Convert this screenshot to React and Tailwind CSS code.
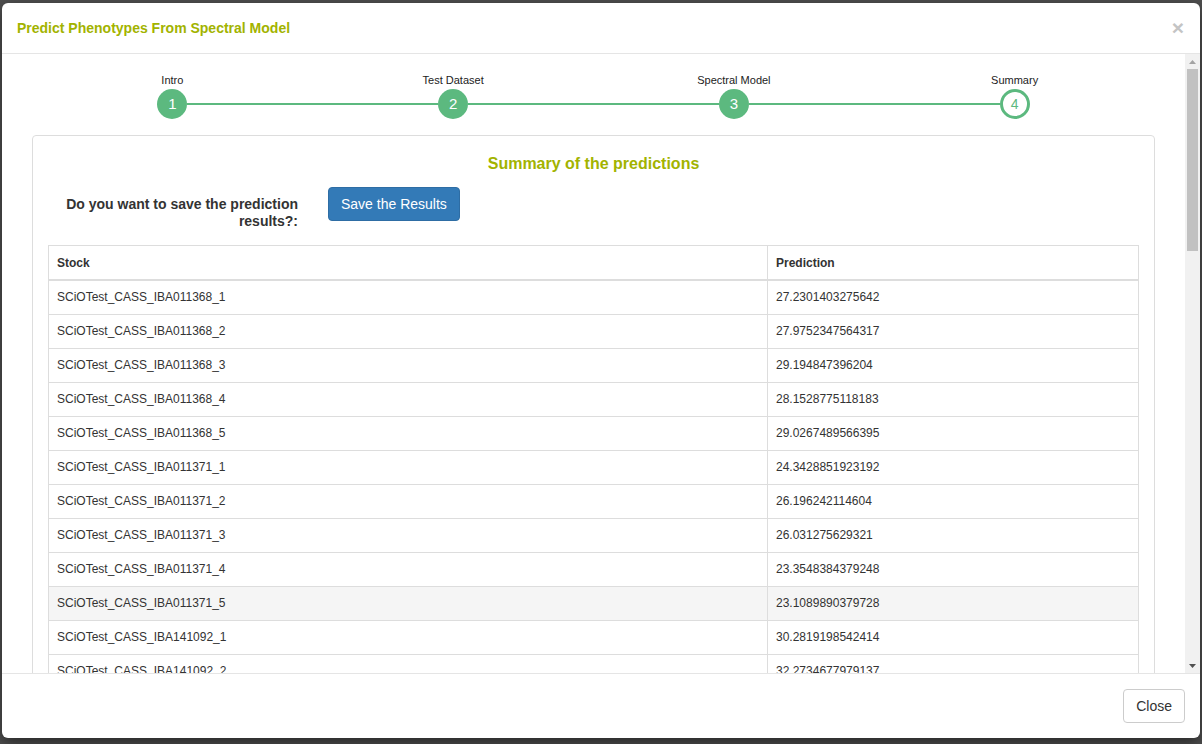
const steps = ["Intro", "Test Dataset", "Spectral Model", "Summary"];

const rows = [
  ["SCiOTest_CASS_IBA011368_1", "27.2301403275642"],
  ["SCiOTest_CASS_IBA011368_2", "27.9752347564317"],
  ["SCiOTest_CASS_IBA011368_3", "29.194847396204"],
  ["SCiOTest_CASS_IBA011368_4", "28.1528775118183"],
  ["SCiOTest_CASS_IBA011368_5", "29.0267489566395"],
  ["SCiOTest_CASS_IBA011371_1", "24.3428851923192"],
  ["SCiOTest_CASS_IBA011371_2", "26.196242114604"],
  ["SCiOTest_CASS_IBA011371_3", "26.031275629321"],
  ["SCiOTest_CASS_IBA011371_4", "23.3548384379248"],
  ["SCiOTest_CASS_IBA011371_5", "23.1089890379728"],
  ["SCiOTest_CASS_IBA141092_1", "30.2819198542414"],
  ["SCiOTest_CASS_IBA141092_2", "32.2734677979137"],
];

function Stepper() {
  return (
    <div className="grid grid-cols-4">
      {steps.map((label, i) => (
        <div key={label} className="flex flex-col items-center">
          <div className="text-[11px] leading-[13px] text-[#222] mb-[2px]">{label}</div>
          <div className="flex items-center w-full">
            <div className={`flex-1 h-[2px] ${i === 0 ? "" : "bg-[#5cb97f]"}`}></div>
            {i === 3 ? (
              <div className="w-[30px] h-[30px] rounded-full border-[3px] border-[#5cb97f] bg-white text-[#5cb97f] flex items-center justify-center text-[14px]">
                {i + 1}
              </div>
            ) : (
              <div className="w-[30px] h-[30px] rounded-full bg-[#5cb97f] text-white flex items-center justify-center text-[15px]">
                {i + 1}
              </div>
            )}
            <div className={`flex-1 h-[2px] ${i === 3 ? "" : "bg-[#5cb97f]"}`}></div>
          </div>
        </div>
      ))}
    </div>
  );
}

// classic scrollbar drawn by hand (headless browser uses overlay scrollbars)
function Scrollbar() {
  return (
    <div className="w-[15px] shrink-0 bg-[#f1f1f1] flex flex-col items-center">
      <div className="h-[15px] w-full flex items-center justify-center">
        <svg width="7" height="4" viewBox="0 0 7 4">
          <path d="M0 4 L3.5 0 L7 4 Z" fill="#a3a3a3" />
        </svg>
      </div>
      <div className="w-[11px] h-[182px] bg-[#c1c1c1]"></div>
      <div className="flex-1"></div>
      <div className="h-[15px] w-full flex items-center justify-center">
        <svg width="7" height="4" viewBox="0 0 7 4">
          <path d="M0 0 L7 0 L3.5 4 Z" fill="#505050" />
        </svg>
      </div>
    </div>
  );
}

export default function App() {
  return (
    <div
      className="h-[744px] w-full bg-[#4f4f4f] pt-[3px] px-[2px] pb-[6px]"
      style={{ fontFamily: '"Liberation Sans", Arial, sans-serif' }}
    >
      <div className="h-[735px] bg-white rounded-[6px] shadow-[0_5px_15px_rgba(0,0,0,0.5)] flex flex-col overflow-hidden text-[#333]">
        {/* Header */}
        <div className="h-[51px] shrink-0 border-b border-[#e5e5e5] flex items-center justify-between pl-[15px] pr-[15px]">
          <h4 className="text-[14px] font-bold text-[#a2b300]">Predict Phenotypes From Spectral Model</h4>
          <button className="text-[21px] font-bold leading-none text-[#c4c4c4] -mt-[2px] mr-[1px]">×</button>
        </div>

        {/* Body */}
        <div className="flex-1 min-h-0 flex">
          <div className="flex-1 overflow-hidden px-[30px] pt-[20px] pb-[15px]">
            <Stepper />

            <div className="mt-[16px] border border-[#ddd] rounded-[4px] px-[15px] pt-[17px] pb-[15px]">
              <h4 className="text-center text-[16px] leading-[22px] font-bold text-[#a2b300]">
                Summary of the predictions
              </h4>

              <div className="flex items-start mt-[12px]">
                <label className="w-[250px] text-right text-[14px] leading-[17px] font-bold pt-[9px]">
                  Do you want to save the prediction results?:
                </label>
                <button className="ml-[30px] h-[34px] px-[12px] bg-[#337ab7] border border-[#2e6da4] rounded-[4px] text-white text-[14px]">
                  Save the Results
                </button>
              </div>

              <table className="mt-[15px] w-full border-collapse border border-[#ddd] text-[12px]">
                <thead>
                  <tr>
                    <th className="w-[719px] text-left font-bold h-[34.5px] px-[8px] border border-[#ddd] border-b-2">Stock</th>
                    <th className="text-left font-bold h-[34.5px] px-[8px] border border-[#ddd] border-b-2">Prediction</th>
                  </tr>
                </thead>
                <tbody>
                  {rows.map(([stock, value], i) => (
                    <tr key={stock} className={i === 9 ? "bg-[#f5f5f5]" : ""}>
                      <td className="h-[34px] px-[8px] border border-[#ddd]">{stock}</td>
                      <td className="h-[34px] px-[8px] border border-[#ddd]">{value}</td>
                    </tr>
                  ))}
                </tbody>
              </table>
            </div>
          </div>
          <Scrollbar />
        </div>

        {/* Footer */}
        <div className="h-[65px] shrink-0 border-t border-[#e5e5e5] flex items-center justify-end px-[15px]">
          <button className="h-[34px] px-[12px] border border-[#ccc] rounded-[4px] bg-white text-[14px] text-[#333]">
            Close
          </button>
        </div>
      </div>
    </div>
  );
}
